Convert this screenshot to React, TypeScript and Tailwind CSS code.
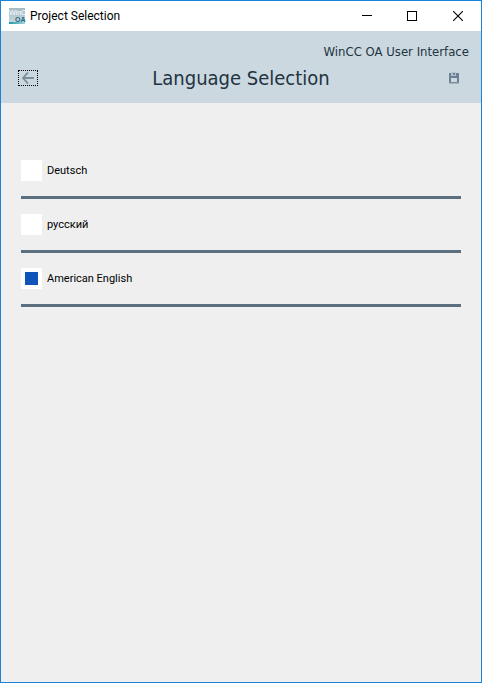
import { useState } from 'react'

const languages = [
  { id: 'de', label: 'Deutsch' },
  { id: 'ru', label: 'русский' },
  { id: 'en', label: 'American English' },
]

function Logo() {
  return (
    <svg width="17" height="16" viewBox="0 0 17 16" aria-hidden="true">
      <defs>
        <linearGradient id="logo-bg" x1="0" y1="0" x2="0" y2="1">
          <stop offset="0" stopColor="#a4bac4" />
          <stop offset="0.8" stopColor="#c3d4da" />
        </linearGradient>
        <linearGradient id="logo-bar" x1="0" y1="0" x2="1" y2="0">
          <stop offset="0" stopColor="#1f9aa2" />
          <stop offset="1" stopColor="#9fd6da" />
        </linearGradient>
      </defs>
      <rect width="16" height="16" fill="url(#logo-bg)" />
      <rect y="14" width="16" height="2" fill="url(#logo-bar)" />
      <text x="0" y="7" fontSize="7" fill="#fff" fontFamily="Liberation Sans, sans-serif">WinC</text>
      <text x="6" y="14" fontSize="7" fontWeight="bold" fill="#1c6684" fontFamily="Liberation Sans, sans-serif">OA</text>
    </svg>
  )
}

function TitleBar() {
  return (
    <div className="flex h-[30px] items-center bg-white pl-2">
      <Logo />
      <span className="ml-1 flex-1 font-[Roboto,sans-serif] text-[12px] leading-4 text-black">
        Project Selection
      </span>
      <button aria-label="Minimize" className="flex h-full w-[45px] items-center justify-center">
        <svg width="10" height="10" viewBox="0 0 10 10" shapeRendering="crispEdges">
          <path d="M0 4.5h10" stroke="#000" />
        </svg>
      </button>
      <button aria-label="Maximize" className="flex h-full w-[46px] items-center justify-center">
        <svg width="10" height="10" viewBox="0 0 10 10" shapeRendering="crispEdges">
          <path d="M.5 .5h9v9h-9z" fill="none" stroke="#000" />
        </svg>
      </button>
      <button aria-label="Close" className="flex h-full w-[46px] items-center justify-center">
        <svg width="10" height="10" viewBox="0 0 10 10">
          <path d="M0 0l10 10M10 0L0 10" stroke="#000" strokeWidth="1.1" />
        </svg>
      </button>
    </div>
  )
}

function Header() {
  return (
    <header className="bg-[#cbd8e0] pt-[13px] pb-[11px] font-['DejaVu_Sans_Condensed','DejaVu_Sans',sans-serif] text-[#22333f]">
      <p className="px-3 text-right text-[13px] leading-4">WinCC OA User Interface</p>
      <div className="mt-1 flex items-center justify-between px-[17px]">
        <button
          aria-label="Back"
          className="flex h-4 w-5 items-center justify-center border border-dotted border-black"
        >
          <svg width="12" height="12" viewBox="0 0 12 12" fill="none" stroke="#7b8e9c">
            <path d="M1 6h11" strokeWidth="2" />
            <path d="M6 .5L1 6l5 5.5" strokeWidth="1.8" />
          </svg>
        </button>
        <h1 className="text-[20px] leading-7">Language Selection</h1>
        <button aria-label="Save" className="flex h-4 w-5 items-center justify-center">
          <svg width="10" height="12" viewBox="0 0 10 12" shapeRendering="crispEdges">
            <path d="M0 1h10v10H0z" fill="#6c8091" />
            <path d="M2 0h5v4H2z" fill="#b4c2cd" />
            <path d="M4 1h2v2H4z" fill="#6c8091" />
            <path d="M2 6h6v4H2z" fill="#cbd8e0" />
            <path d="M0 10h10v2H0z" fill="#a5b4c0" />
            <path d="M0 10h10v1H0z" fill="#7d8f9e" />
          </svg>
        </button>
      </div>
    </header>
  )
}

export default function App() {
  const [selected, setSelected] = useState('en')

  return (
    <div className="flex min-h-screen flex-col border border-[#1883d7] bg-[#efefef]">
      <TitleBar />
      <Header />
      <main className="flex flex-1 flex-col gap-[15px] px-5 pt-[57px]">
        {languages.map((lang) => (
          <label
            key={lang.id}
            className="flex items-center gap-[5px] border-b-[3px] border-[#5c6f7f] pb-[15px] font-[Roboto,sans-serif] text-[11px] leading-4 text-black"
          >
            <input
              type="radio"
              name="language"
              value={lang.id}
              checked={selected === lang.id}
              onChange={() => setSelected(lang.id)}
              className="size-[21px] appearance-none border-4 border-white bg-white checked:bg-[#0f54bb]"
            />
            {lang.label}
          </label>
        ))}
      </main>
    </div>
  )
}
